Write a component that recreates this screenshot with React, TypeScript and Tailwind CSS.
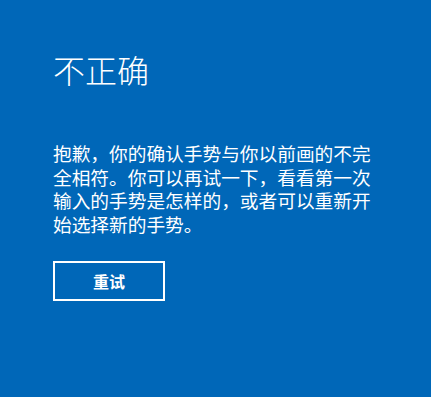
export default function App() {
  return (
    <div
      className="h-[397px] w-[431px] bg-[#0067b8] pl-[53px] pt-[49px] text-white"
      style={{ fontFamily: '"Noto Sans CJK SC", "Noto Sans", sans-serif' }}
    >
      <h1 className="text-[32px] font-light leading-[40px]">不正确</h1>
      <p className="mt-[52px] w-[325px] text-[18.7px] leading-[23.5px]">
        抱歉，你的确认手势与你以前画的不完全相符。你可以再试一下，看看第一次输入的手势是怎样的，或者可以重新开始选择新的手势。
      </p>
      <button className="mt-[26px] flex h-[40px] w-[112px] items-center justify-center border-2 border-white text-[16px] font-bold">
        重试
      </button>
    </div>
  );
}
